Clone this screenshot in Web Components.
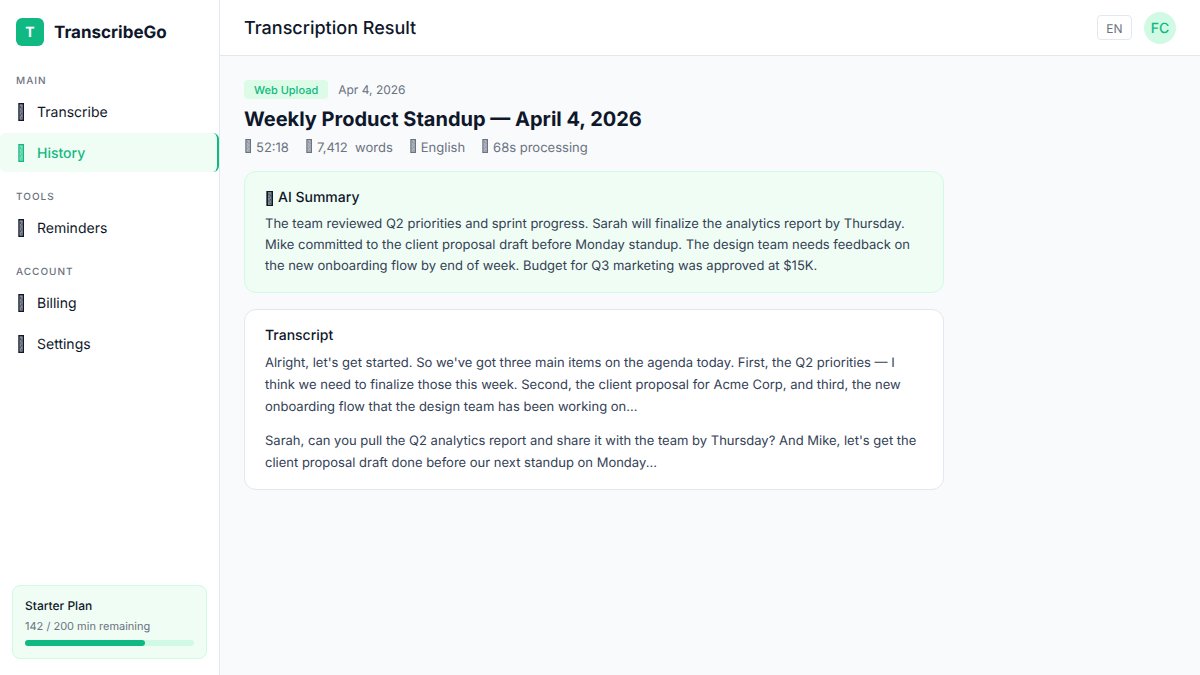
<!DOCTYPE html>
<html lang="en">
<head>
<meta charset="utf-8">
<meta name="viewport" content="width=device-width, initial-scale=1">
<title>TranscribeGo</title>
<style>
  :root {
    --green: #10b981; --mint: #d1fae5; --pale: #f0fdf4;
    --ink: #0f172a; --body: #334155; --muted: #6b7280; --line: #e2e8f0;
  }
  body { margin: 0; font-family: Inter, sans-serif; color: var(--ink); background: #f8fafc; text-rendering: geometricPrecision; }
</style>
</head>
<body>
<tg-app>
  <tg-sidebar slot="side">
    <tg-section label="Main">
      <tg-link href="#transcribe">Transcribe</tg-link>
      <tg-link href="#history" active>History</tg-link>
    </tg-section>
    <tg-section label="Tools">
      <tg-link href="#reminders">Reminders</tg-link>
    </tg-section>
    <tg-section label="Account">
      <tg-link href="#billing">Billing</tg-link>
      <tg-link href="#settings">Settings</tg-link>
    </tg-section>
    <tg-plan slot="foot" used="142" total="200">Starter Plan</tg-plan>
  </tg-sidebar>
  <tg-topbar slot="top">Transcription Result</tg-topbar>
  <tg-result>
    <tg-card tone="mint" heading="AI Summary">
      <tg-glyph slot="icon"></tg-glyph>
      <p>The team reviewed Q2 priorities and sprint progress. Sarah will finalize the analytics report by Thursday. Mike committed to the client proposal draft before Monday standup. The design team needs feedback on the new onboarding flow by end of week. Budget for Q3 marketing was approved at $15K.</p>
    </tg-card>
    <tg-card heading="Transcript">
      <p>Alright, let's get started. So we've got three main items on the agenda today. First, the Q2 priorities — I think we need to finalize those this week. Second, the client proposal for Acme Corp, and third, the new onboarding flow that the design team has been working on...</p>
      <p>Sarah, can you pull the Q2 analytics report and share it with the team by Thursday? And Mike, let's get the client proposal draft done before our next standup on Monday...</p>
    </tg-card>
  </tg-result>
</tg-app>
<script>
  class Base extends HTMLElement {
    connectedCallback() {
      if (!this.shadowRoot) this.attachShadow({ mode: 'open' }).innerHTML = this.view();
    }
    attr(name) { return this.getAttribute(name) || ''; }
  }

  /* Narrow upright box filled with a fine speckle, in the text colour. */
  customElements.define('tg-glyph', class extends Base {
    view() { return `
      <style>
        :host { display: block; flex: none; width: 7px; height: 15px; }
        :host([size="s"]) { width: 6px; height: 14px; }
        :host([size="l"]) { width: 6px; height: 18px; }
        svg { display: block; width: 100%; height: 100%; }
      </style>
      <svg viewBox="0 0 6 18" preserveAspectRatio="none" fill="currentColor" aria-hidden="true">
        <path fill-rule="evenodd" d="M.3 0H6V18H.3ZM1.7 1.5V16.5H4.6V1.5Z"/>
        <path opacity=".5" d="M1.7 1.5H4.6V16.5H1.7Z"/>
        <path opacity=".5" d="M2 3h1v2H2zM3.4 4.5h1v2h-1zM2 7.5h1.5v1H2zM3.2 9.5h1v2h-1zM2 11.5h1v1.5H2zM3.2 14h1v1.5h-1z"/>
      </svg>`; }
  });

  customElements.define('tg-app', class extends Base {
    view() { return `
      <style>
        :host { display: grid; grid-template-columns: 220px 1fr; min-height: 100vh; }
        .main { display: flex; flex-direction: column; min-width: 0; }
      </style>
      <slot name="side"></slot>
      <div class="main"><slot name="top"></slot><slot></slot></div>`; }
  });

  customElements.define('tg-sidebar', class extends Base {
    view() { return `
      <style>
        :host { display: flex; flex-direction: column; background: #fff; border-right: 1px solid var(--line); }
        .brand { display: flex; align-items: center; gap: 10px; padding: 18px 16px 26px; font-size: 17px; line-height: 26px; font-weight: 700; }
        .brand span { padding-top: 2px; }
        .brand .logo { width: 28px; border-radius: 6px; background: var(--green); color: #fff; font-size: 14px; text-align: center; }
        nav { flex: 1; display: flex; flex-direction: column; gap: 16px; }
      </style>
      <div class="brand"><span class="logo">T</span><span>TranscribeGo</span></div>
      <nav><slot></slot></nav>
      <slot name="foot"></slot>`; }
  });

  customElements.define('tg-section', class extends Base {
    view() { return `
      <style>
        :host { display: block; }
        h2 { margin: 0 0 2px; padding: 0 16px; font-size: 10px; line-height: 18px; font-weight: 500; letter-spacing: 1px; text-transform: uppercase; color: var(--muted); }
        div { display: flex; flex-direction: column; gap: 2px; }
      </style>
      <h2>${this.attr('label')}</h2><div><slot></slot></div>`; }
  });

  customElements.define('tg-link', class extends Base {
    view() { return `
      <style>
        :host { display: block; }
        a { display: flex; align-items: center; gap: 13px; padding: 8px 18px; border-radius: 6px; font-size: 14px; line-height: 21px; color: inherit; text-decoration: none; }
        span { padding-top: 2px; }
        :host([active]) a { background: var(--pale); color: var(--green); font-weight: 500; border-right: 2px solid var(--green); }
      </style>
      <a href="${this.attr('href')}"><tg-glyph size="l"></tg-glyph><span><slot></slot></span></a>`; }
  });

  customElements.define('tg-plan', class extends Base {
    view() { return `
      <style>
        :host { display: block; margin: 12px 12px 16px; padding: 12px; background: var(--pale); border: 1px solid var(--mint); border-radius: 8px; }
        .name { font-size: 12px; line-height: 16px; font-weight: 500; }
        .left { margin: 4px 0 6px; font-size: 11px; line-height: 16px; color: var(--muted); }
        .bar { height: 6px; border-radius: 3px; background: var(--mint); }
        .fill { width: 71%; height: 6px; border-radius: 3px; background: var(--green); }
      </style>
      <div class="name"><slot></slot></div>
      <div class="left" id="left">${this.attr('used')} / ${this.attr('total')} min remaining</div>
      <div class="bar" role="progressbar" aria-labelledby="left" aria-valuenow="${this.attr('used')}" aria-valuemax="${this.attr('total')}"><div class="fill"></div></div>`; }
  });

  customElements.define('tg-topbar', class extends Base {
    view() { return `
      <style>
        :host { display: flex; align-items: center; gap: 12px; height: 55px; padding: 0 24px; background: #fff; border-bottom: 1px solid var(--line); }
        h1 { flex: 1; margin: 0; padding-top: 2px; font-size: 18px; line-height: 28px; font-weight: 500; }
        button { font: inherit; text-rendering: inherit; cursor: pointer; }
        .lang { min-width: 35px; padding: 5px 8px 3px; border: 1px solid var(--line); border-radius: 4px; background: #fff; color: var(--muted); font-size: 12px; line-height: 15px; }
        .user { width: 32px; height: 32px; padding: 2px 0 0; border: 0; border-radius: 50%; background: var(--mint); color: var(--green); font-size: 14px; font-weight: 500; }
      </style>
      <h1><slot></slot></h1>
      <button class="lang" type="button">EN</button>
      <button class="user" type="button">FC</button>`; }
  });

  customElements.define('tg-result', class extends Base {
    view() { return `
      <style>
        :host { display: block; max-width: 700px; padding: 24px; }
        .meta { display: flex; align-items: center; gap: 10px; font-size: 12px; line-height: 19px; color: var(--muted); }
        .tag { padding: 2px 10px 0; border-radius: 4px; background: #dcfce7; color: var(--green); font-size: 11px; line-height: 17px; font-weight: 500; }
        h2 { margin: 4px 0; font-size: 20px; line-height: 32px; font-weight: 700; }
        .facts { display: flex; flex-wrap: wrap; gap: 16px; margin-bottom: 14px; font-size: 13px; line-height: 18px; color: var(--muted); }
        .facts span { display: flex; align-items: start; gap: 5px; padding-left: 1px; }
        .cards { display: flex; flex-direction: column; gap: 16px; }
      </style>
      <div class="meta"><span class="tag">Web Upload</span><span>Apr 4, 2026</span></div>
      <h2>Weekly Product Standup — April 4, 2026</h2>
      <div class="facts">
        <span><tg-glyph size="s"></tg-glyph>52:18</span>
        <span><tg-glyph size="s"></tg-glyph>7,412&nbsp; words</span>
        <span><tg-glyph size="s"></tg-glyph>English</span>
        <span><tg-glyph size="s"></tg-glyph>68s processing</span>
      </div>
      <div class="cards"><slot></slot></div>`; }
  });

  customElements.define('tg-card', class extends Base {
    view() { return `
      <style>
        :host { display: block; padding: 15px 20px; background: #fff; border: 1px solid var(--line); border-radius: 12px; font-size: 13px; line-height: 22px; color: var(--body); }
        :host([tone="mint"]) { background: var(--pale); border-color: var(--mint); line-height: 21px; }
        h3 { display: flex; align-items: center; gap: 5px; margin: 0 0 5px; font-size: 14px; line-height: 22px; font-weight: 500; color: var(--ink); }
        ::slotted(tg-glyph) { margin-left: 1px; }
        ::slotted(p) { margin: 0 0 12px; }
        ::slotted(p:last-child) { margin: 0; }
      </style>
      <h3><slot name="icon"></slot>${this.attr('heading')}</h3><slot></slot>`; }
  });
</script>
</body>
</html>
